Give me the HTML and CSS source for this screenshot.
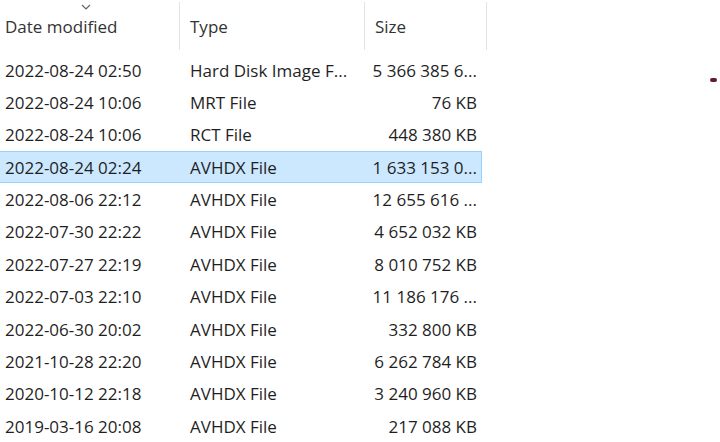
FILE: index.html
```html
<!DOCTYPE html>
<html>
<head>
<meta charset="utf-8">
<link rel="stylesheet" href="styles.css">
</head>
<body>
<div class="view">
  <div class="header">
    <div class="hcell date">
      <svg class="chev" width="10" height="6" viewBox="0 0 10 6"><path d="M1 1 L5 5 L9 1" fill="none" stroke="#666" stroke-width="1.2"/></svg>
      Date modified
    </div>
    <div class="hcell type">Type</div>
    <div class="hcell size">Size</div>
  </div>
  <div class="rows">
    <div class="row"><span class="c-date">2022-08-24 02:50</span><span class="c-type">Hard Disk Image F...</span><span class="c-size">5 366 385 6...</span></div>
    <div class="row"><span class="c-date">2022-08-24 10:06</span><span class="c-type">MRT File</span><span class="c-size">76 KB</span></div>
    <div class="row"><span class="c-date">2022-08-24 10:06</span><span class="c-type">RCT File</span><span class="c-size">448 380 KB</span></div>
    <div class="row selected"><span class="c-date">2022-08-24 02:24</span><span class="c-type">AVHDX File</span><span class="c-size">1 633 153 0...</span></div>
    <div class="row"><span class="c-date">2022-08-06 22:12</span><span class="c-type">AVHDX File</span><span class="c-size">12 655 616 ...</span></div>
    <div class="row"><span class="c-date">2022-07-30 22:22</span><span class="c-type">AVHDX File</span><span class="c-size">4 652 032 KB</span></div>
    <div class="row"><span class="c-date">2022-07-27 22:19</span><span class="c-type">AVHDX File</span><span class="c-size">8 010 752 KB</span></div>
    <div class="row"><span class="c-date">2022-07-03 22:10</span><span class="c-type">AVHDX File</span><span class="c-size">11 186 176 ...</span></div>
    <div class="row"><span class="c-date">2022-06-30 20:02</span><span class="c-type">AVHDX File</span><span class="c-size">332 800 KB</span></div>
    <div class="row"><span class="c-date">2021-10-28 22:20</span><span class="c-type">AVHDX File</span><span class="c-size">6 262 784 KB</span></div>
    <div class="row"><span class="c-date">2020-10-12 22:18</span><span class="c-type">AVHDX File</span><span class="c-size">3 240 960 KB</span></div>
    <div class="row"><span class="c-date">2019-03-16 20:08</span><span class="c-type">AVHDX File</span><span class="c-size">217 088 KB</span></div>
  </div>
  <div class="dot"></div>
</div>
</body>
</html>
```
FILE: styles.css
```css
html, body {
  margin: 0;
  padding: 0;
  background: #fff;
}
body {
  width: 720px;
  height: 442px;
  overflow: hidden;
  font-family: "Open Sans", "Noto Sans", sans-serif;
  font-size: 17px;
  color: #1f1f1f;
}
.view {
  position: relative;
  width: 720px;
  height: 442px;
}
.header {
  display: grid;
  grid-template-columns: 180px 185px 122px;
  height: 54px;
}
.hcell {
  position: relative;
  display: flex;
  align-items: center;
  height: 48px;
  margin-top: 2px;
  color: #333;
  border-right: 1px solid #e3e3e3;
  box-sizing: border-box;
}
.hcell.date { padding-left: 5px; }
.hcell.type { padding-left: 10px; }
.hcell.size { padding-left: 10px; }
.chev {
  position: absolute;
  left: 81px;
  top: 2px;
}
.rows {
  display: flex;
  flex-direction: column;
}
.row {
  display: grid;
  grid-template-columns: 180px 185px 112px;
  width: 482px;
  height: 32.36px;
  align-items: center;
  box-sizing: border-box;
  white-space: nowrap;
}
.row.selected {
  background: #cce8ff;
  border: 1px solid #99d1ff;
  border-left: none;
}
.c-date { padding-left: 5px; }
.c-type { padding-left: 10px; overflow: hidden; }
.c-size { text-align: right; }
.dot {
  position: absolute;
  left: 710px;
  top: 78px;
  width: 7px;
  height: 4px;
  border-radius: 2px;
  background: #6b1a2a;
}
```
